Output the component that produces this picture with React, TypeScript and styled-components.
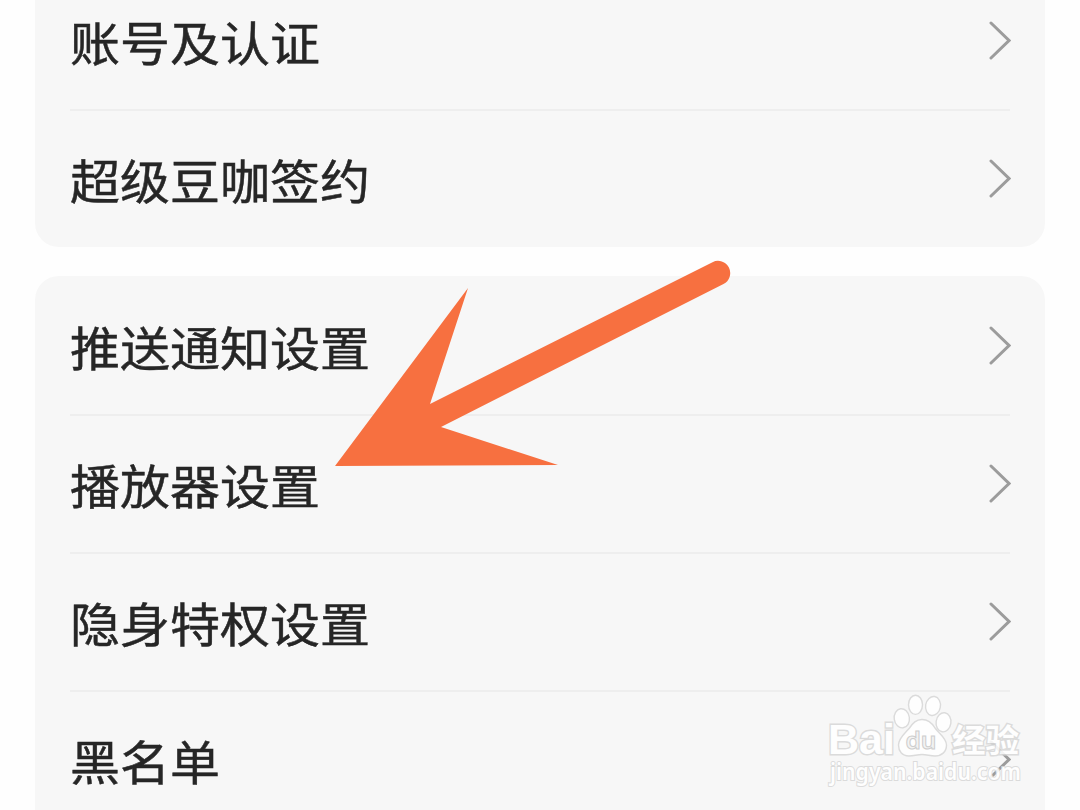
import React from 'react';
import styled, { createGlobalStyle } from "styled-components";


type RowPropsType = {
    title: string
    divider?: boolean
}

const accountItems = ['账号及认证', '超级豆咖签约']
const settingItems = ['推送通知设置', '播放器设置', '隐身特权设置', '黑名单']

const Row = (props: RowPropsType) => {
    return (
        <StyledRow $divider={props.divider}>
            <Title>{props.title}</Title>
            <Chevron viewBox="0 0 24 40">
                <path d="M4 3 L22 20.5 L4 38"/>
            </Chevron>
        </StyledRow>
    );
};

const Group = (props: { items: string[] }) => {
    return (
        <Card>
            {props.items.map((item, i) => (
                <Row key={item} title={item} divider={i < props.items.length - 1}/>
            ))}
        </Card>
    );
};

const Watermark = () => {
    return (
        <StyledWatermark viewBox="820 690 210 105">
            <BrandText x="828" y="753.5" fontSize="43" textLength="67" lengthAdjust="spacingAndGlyphs">Bai</BrandText>
            <ellipse cx="901.8" cy="718.3" rx="7.6" ry="9.6" transform="rotate(-8 901.8 718.3)"/>
            <ellipse cx="915.5" cy="704.8" rx="7" ry="9.6"/>
            <ellipse cx="933" cy="706" rx="7.4" ry="9.6" transform="rotate(10 933 706)"/>
            <ellipse cx="943.5" cy="722.3" rx="7.4" ry="9.6" transform="rotate(8 943.5 722.3)"/>
            <path d="M922 719.5 C928 719.5 932 723 935 728 C939 733.5 946.5 738 946.5 745 C946.5 752 941.5 756 935 756 C930 756 927 754.5 922 754.5 C917 754.5 914 756 909 756 C902 756 898.5 751 898.5 745 C898.5 738 905.5 733 909.5 728 C913 723 916 719.5 922 719.5 Z"/>
            <DuText x="905.5" y="749" fontSize="24" textLength="31" lengthAdjust="spacingAndGlyphs">du</DuText>
            <BrandText x="952" y="751.5" fontSize="32" textLength="67" lengthAdjust="spacingAndGlyphs">经验</BrandText>
            <SiteText x="830" y="780" fontSize="23" textLength="191" lengthAdjust="spacingAndGlyphs">jingyan.baidu.com</SiteText>
        </StyledWatermark>
    );
};

const App = () => {
    return (
        <Page>
            <GlobalStyle/>
            <Group items={accountItems}/>
            <Group items={settingItems}/>
            <Arrow viewBox="0 0 400 210">
                <path d="M5 206 L138 28 L100 144 L382.5 2.2 A12.2 12.2 0 0 1 393.5 24 L111 167 L228 205 Z"/>
            </Arrow>
            <Watermark/>
        </Page>
    );
};

export default App;

const GlobalStyle = createGlobalStyle`
    * {
        box-sizing: border-box;
    }

    body {
        margin: 0;
        background: #fefefe;
        font-family: "Noto Sans CJK SC", sans-serif;
    }
`

const Page = styled.main`
    position: relative;
    width: 1080px;
    height: 810px;
    padding: 0 35px;
    overflow: hidden;
    display: flex;
    flex-direction: column;
    gap: 29.4px;
`

const Card = styled.section`
    flex-shrink: 0;
    padding: 0 35px;
    border-radius: 24px;
    background: #f7f7f7;

    &:first-of-type {
        margin-top: -29px;
    }

    &:last-of-type {
        padding-bottom: 24px;
    }
`

const StyledRow = styled.div<{ $divider?: boolean }>`
    height: 138px;
    display: flex;
    align-items: center;
    justify-content: space-between;
    box-shadow: ${props => props.$divider ? '0 2px 0 #eeeeee' : 'none'};
`

const Title = styled.span`
    padding-bottom: 1px;
    color: #262626;
    font-size: 50px;
    line-height: 72px;
    white-space: nowrap;
    transform: scaleY(0.94);
    -webkit-text-stroke: 0.5px #262626;
`

const Chevron = styled.svg`
    width: 24px;
    height: 40px;
    margin-right: -1px;
    fill: none;
    stroke: #9c9c9c;
    stroke-width: 3;
    stroke-linecap: round;
`

const Arrow = styled.svg`
    position: absolute;
    left: 330px;
    top: 260px;
    width: 400px;
    height: 210px;
    overflow: visible;
    fill: #f77040;
`

const StyledWatermark = styled.svg`
    position: absolute;
    left: 820px;
    top: 690px;
    width: 210px;
    height: 105px;
    overflow: visible;
    fill: #ffffff;
    stroke: #d8d8d8;
    stroke-width: 1.4;
    opacity: 0.88;
`

const BrandText = styled.text`
    font-family: "Liberation Sans", "Noto Sans CJK SC", sans-serif;
    font-weight: 700;
    paint-order: stroke;
    stroke-width: 2.8;
`

const DuText = styled.text`
    font-family: "Noto Sans", sans-serif;
    font-weight: 600;
    fill: #f3f3f3;
    stroke: #c8c8c8;
    stroke-width: 1;
`

const SiteText = styled.text`
    font-family: "Noto Sans", sans-serif;
    font-weight: 600;
    paint-order: stroke;
    stroke-width: 2;
`
